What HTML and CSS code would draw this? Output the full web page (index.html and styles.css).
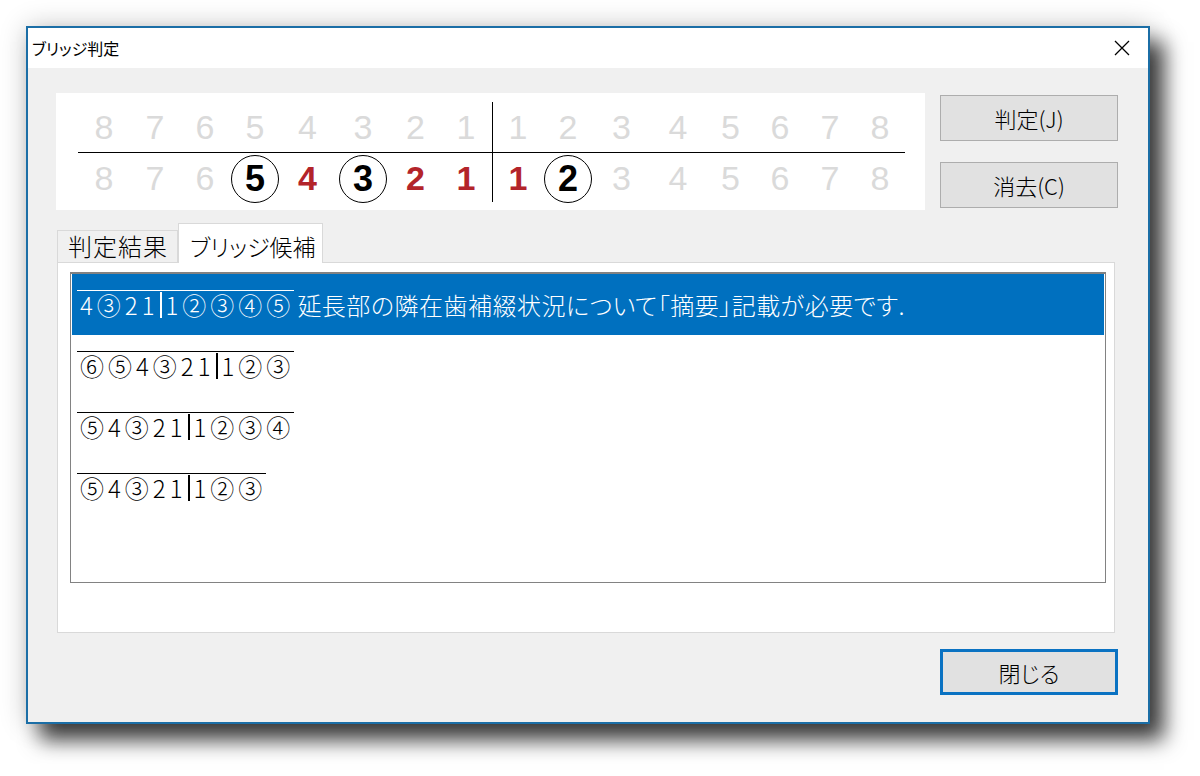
FILE: index.html
```html
<!DOCTYPE html>
<html lang="ja">
<head>
  <meta charset="UTF-8">
  <title>ブリッジ判定</title>
  <link rel="stylesheet" href="styles.css">
</head>
<body>
  <div class="window">
    <div class="titlebar">
      <span class="title">ブリッジ判定</span>
      <svg class="close" width="16" height="16" viewBox="0 0 16 16"><path d="M1 1 L15 15 M15 1 L1 15" stroke="#000" stroke-width="1.3" fill="none"/></svg>
    </div>
    <div class="client">
      <div class="top">
        <div class="chart">
          <div class="teeth">
            <!-- 上顎 -->
            <span class="t up">8</span><span class="t up">7</span><span class="t up">6</span><span class="t up">5</span>
            <span class="t up">4</span><span class="t up">3</span><span class="t up">2</span><span class="t up">1</span>
            <span class="t up mid">1</span><span class="t up">2</span><span class="t up">3</span><span class="t up">4</span>
            <span class="t up">5</span><span class="t up">6</span><span class="t up">7</span><span class="t up">8</span>
            <!-- 下顎 -->
            <span class="t">8</span><span class="t">7</span><span class="t">6</span><span class="t"><b class="circ">5</b></span>
            <span class="t red">4</span><span class="t"><b class="circ">3</b></span><span class="t red">2</span><span class="t red">1</span>
            <span class="t mid red">1</span><span class="t"><b class="circ">2</b></span><span class="t">3</span><span class="t">4</span>
            <span class="t">5</span><span class="t">6</span><span class="t">7</span><span class="t">8</span>
          </div>
        </div>
        <div class="side-buttons">
          <button class="btn">判定(J)</button>
          <button class="btn">消去(C)</button>
        </div>
      </div>

      <div class="tabs">
        <span class="tab">判定結果</span>
        <span class="tab active">ブリッジ候補</span>
      </div>
      <div class="tab-panel">
        <div class="listbox">
          <div class="item selected">
            <span class="notation"><span class="l">4③21</span><span class="r">1②③④⑤</span></span>
            <span class="msg">延長部の隣在歯補綴状況について「摘要」記載が必要です.</span>
          </div>
          <div class="item">
            <span class="notation"><span class="l">⑥⑤4③21</span><span class="r">1②③</span></span>
          </div>
          <div class="item">
            <span class="notation"><span class="l">⑤4③21</span><span class="r">1②③④</span></span>
          </div>
          <div class="item">
            <span class="notation"><span class="l">⑤4③21</span><span class="r">1②③</span></span>
          </div>
        </div>
      </div>

      <div class="footer">
        <button class="btn default">閉じる</button>
      </div>
    </div>
  </div>
</body>
</html>
```

FILE: styles.css
```css
* { box-sizing: border-box; }
html, body { height: 100%; }
body { margin: 0; padding-top: 26px; background: #fff; font-family: "Noto Sans CJK JP", sans-serif; font-feature-settings: "palt"; color: #000; }

.window { width: 1124px; height: 698px; margin-left: 26px; border: 2px solid #1b6ea6; background: #f0f0f0;
  box-shadow: 14px 16px 20px rgba(0,0,0,0.75), 0 0 26px rgba(0,0,0,0.2); display: flex; flex-direction: column; }

.titlebar { height: 40px; background: #fff; display: flex; align-items: center; justify-content: space-between; padding: 0 18px 0 4px; }
.title { font-size: 16px; }

.client { flex: 1; padding: 25px 30px 0 28px; }
.top { display: flex; gap: 15px; }

.chart { width: 869px; height: 117px; background: #fff; padding: 9px 0 0 22px; }
.teeth { display: grid; grid-template-columns: 52px 50px 50px 50px 55px 56px 49px 52px 51px 50px 57px 56px 49px 50px 50px 50px;
  grid-template-rows: 51px 49px; font-family: "Liberation Sans", sans-serif; font-size: 34px; color: #dadada; }
.t { display: flex; align-items: center; justify-content: center; padding-top: 2px; }
.t.up { border-bottom: 1px solid #000; padding-top: 0; }
.t.mid { border-left: 1px solid #000; }
.t.red { color: #b3242a; font-weight: bold; }
.circ { width: 48px; height: 48px; border: 1.5px solid #000; border-radius: 50%; display: flex; align-items: center; justify-content: center;
  color: #000; font-size: 36px; }

.side-buttons { display: flex; flex-direction: column; gap: 21px; padding-top: 2px; }
.btn { width: 178px; height: 46px; background: #e1e1e1; border: 1px solid #adadad; font-family: inherit; font-size: 22px;
  font-weight: 300; font-feature-settings: "palt"; color: #000; padding: 0; }
.btn.default { border: 3px solid #0a72c2; }

.tabs { display: flex; align-items: flex-end; margin: 13px 0 0 1px; height: 39px; }
.tab { height: 32px; width: 121px; border: 1px solid #d9d9d9; border-bottom: none; font-size: 24px; line-height: 30px;
  padding-left: 10px; letter-spacing: 1px; font-weight: 300; }
.tab.active { height: 40px; width: 145px; background: #fff; margin-bottom: -1px; position: relative; font-size: 23px;
  line-height: 44px; padding-left: 11px; letter-spacing: 0; }

.tab-panel { width: 1058px; height: 371px; margin-left: 1px; background: #fff; border: 1px solid #d9d9d9; padding: 9px 8px 0 12px; }
.listbox { height: 311px; border: 1px solid #828282; border-top-width: 2px; padding: 0 1px; }

.item { height: 61px; padding: 16px 0 0 5px; display: flex; align-items: flex-start; font-size: 24px; font-weight: 300; }
.item.selected { background: #0070bf; color: #fff; }
.notation { display: flex; border-top: 1px solid currentColor; padding-top: 1px; line-height: 26px; letter-spacing: 4px; }
.notation .l { padding: 0 1px 0 3px; }
.notation .r { border-left: 2px solid currentColor; padding-left: 4px; }
.msg { margin: 2px 0 0 3px; font-size: 24px; line-height: 26px; letter-spacing: 0.5px; }

.footer { display: flex; justify-content: flex-end; margin-top: 16px; }
```
